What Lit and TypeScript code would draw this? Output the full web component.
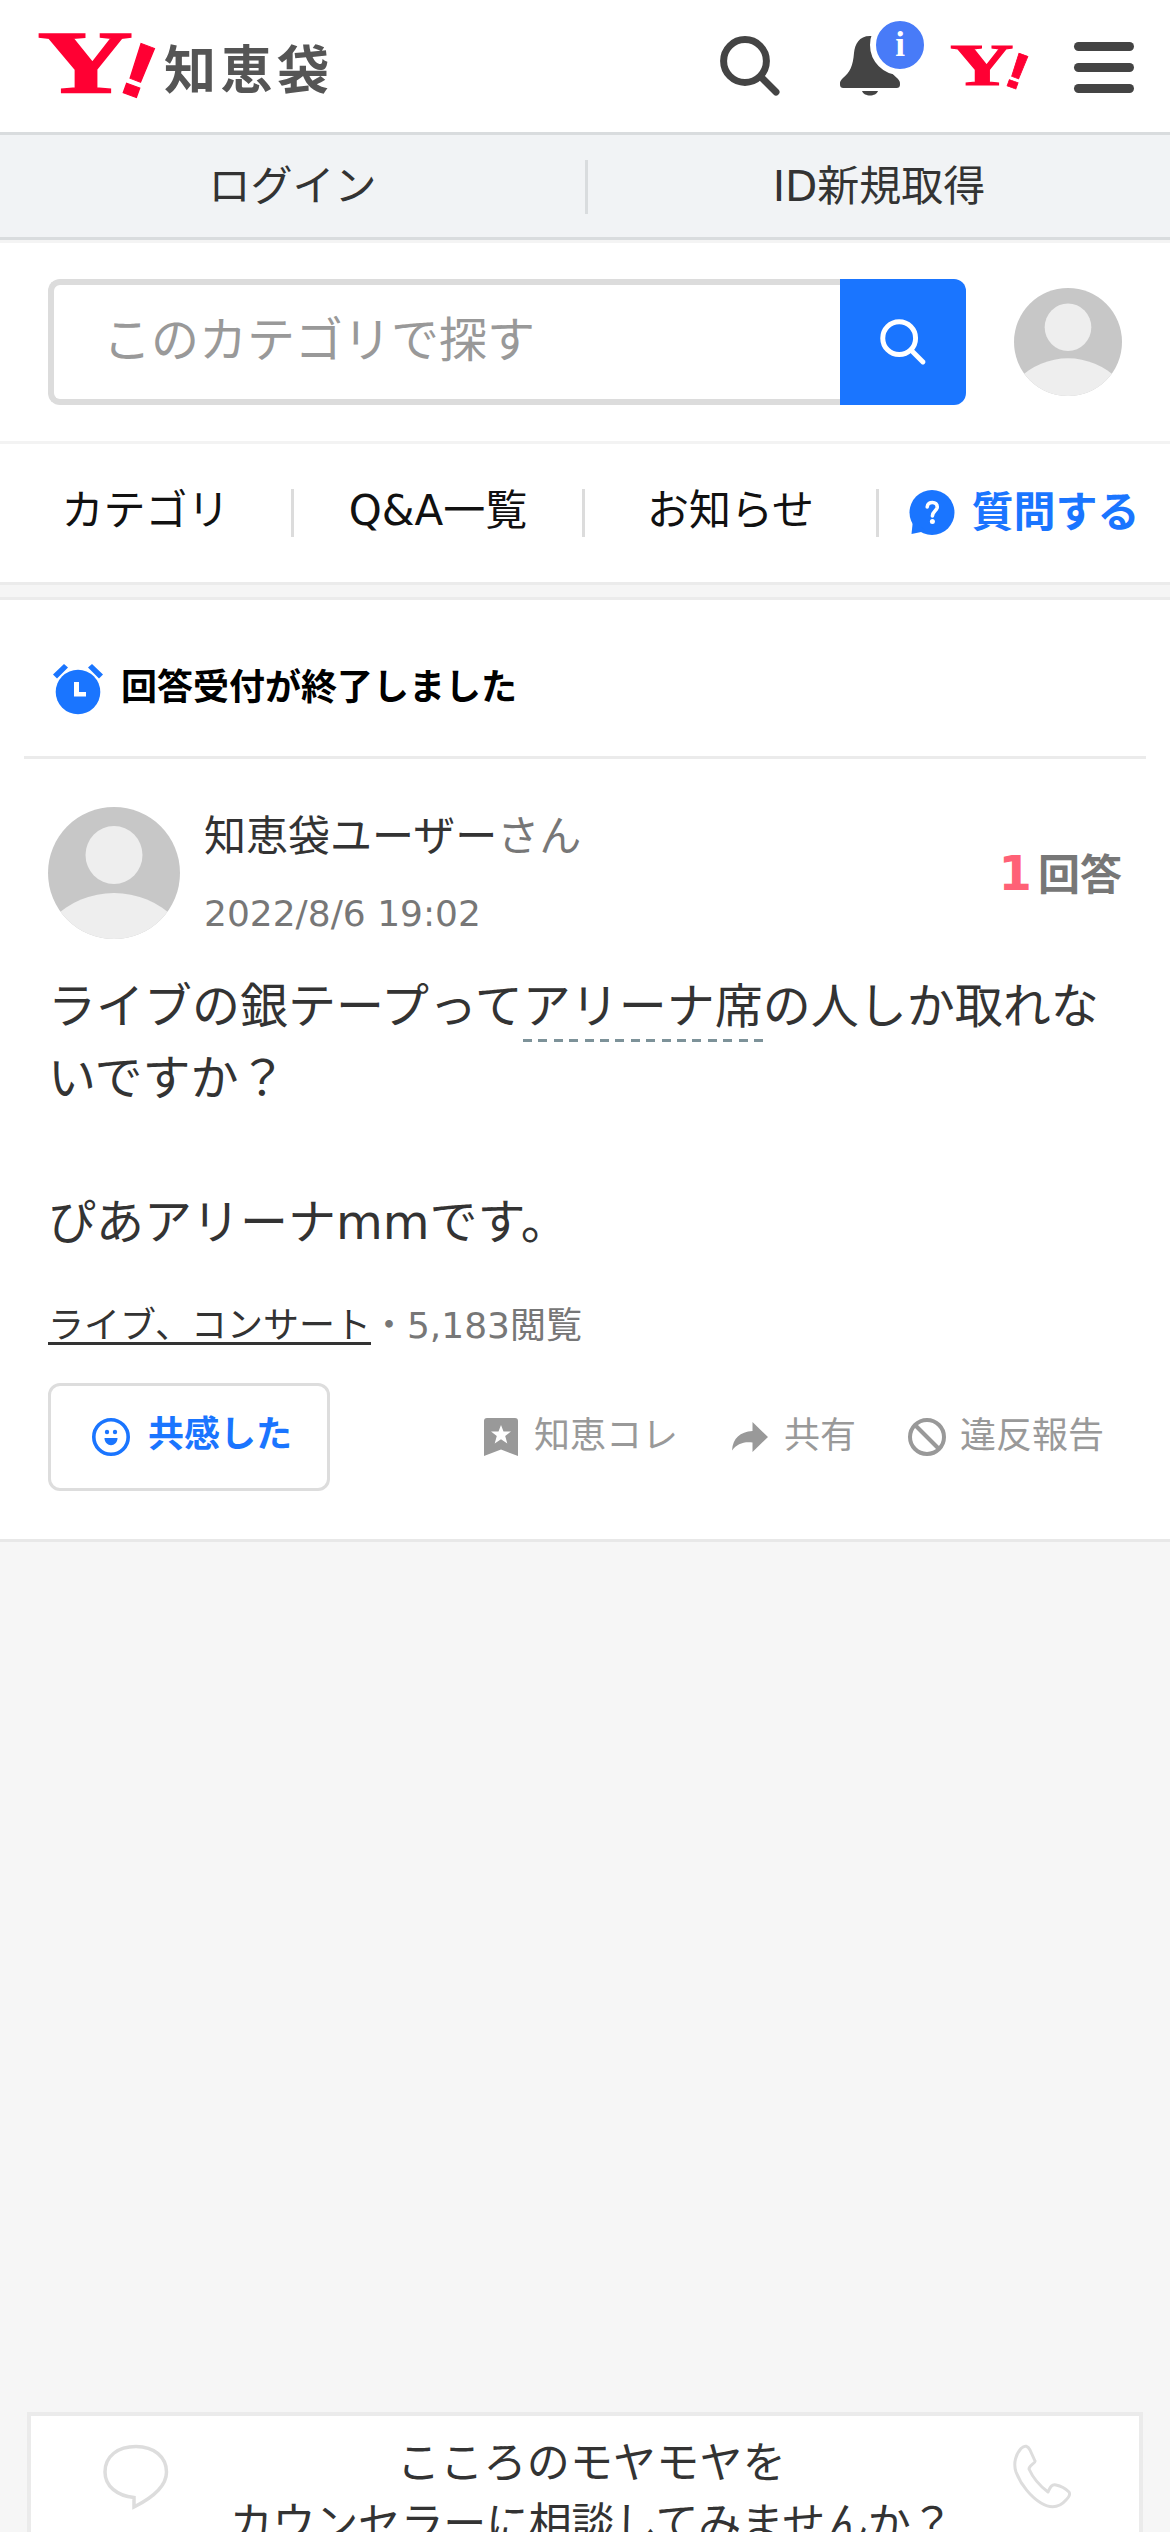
import { LitElement, html, css, svg } from "lit";
import { customElement, property } from "lit/decorators.js";

@customElement("user-avatar")
class UserAvatar extends LitElement {
  static styles = css`
    :host { display: block; flex: none; border-radius: 50%; overflow: hidden; }
    svg { display: block; width: 100%; height: 100%; }
  `;
  render() {
    return html`<svg viewBox="0 0 132 132">
      <rect width="132" height="132" fill="#c7c7c7" />
      <ellipse cx="66" cy="48" rx="28.5" ry="29" fill="#eee" />
      <circle cx="66" cy="172" r="86" fill="#eee" />
    </svg>`;
  }
}

@customElement("brand-mark")
class BrandMark extends LitElement {
  static styles = css`
    :host { display: block; flex: none; }
    svg { display: block; width: 100%; height: 100%; overflow: visible; }
    .y { font: bold 88px "Liberation Serif", serif; stroke: #ff0033; stroke-width: 1.6px; }
    .bang { font: bold 76px "Liberation Sans", sans-serif; stroke: #ff0033; stroke-width: 1px; }
  `;
  render() {
    return html`<svg viewBox="0 0 117 62" fill="#ff0033">
      <text class="y" transform="translate(-1.5 60) scale(1.5 1)">Y</text>
      <text class="bang" transform="translate(75.5 57.5) rotate(20) scale(1.3 1)">!</text>
    </svg>`;
  }
}

@customElement("action-item")
class ActionItem extends LitElement {
  @property() label = "";
  static styles = css`
    :host { display: flex; align-items: center; color: #999; }
    .label { font-size: 36px; line-height: 54px; padding-bottom: 3px; white-space: nowrap; }
  `;
  render() {
    return html`<slot></slot><span class="label">${this.label}</span>`;
  }
}

const magnifier = (w: number, color: string) => svg`
  <g fill="none" stroke=${color} stroke-linecap="round">
    <circle cx="25" cy="25" r="21.4" stroke-width=${w} />
    <path d="M42 42 L56 56" stroke-width=${w} />
  </g>`;

@customElement("app-root")
class AppRoot extends LitElement {
  static styles = css`
    :host {
      display: block;
      width: 1170px;
      height: 2532px;
      overflow: hidden;
      background: #f6f6f6;
      color: #333;
      font-family: "DejaVu Sans", "Noto Sans CJK JP", sans-serif;
    }
    * { box-sizing: border-box; }
    svg { display: block; flex: none; overflow: visible; }
    .header { display: flex; align-items: center; height: 132px; padding: 0 36px 0 39px; background: #fff; }
    .logo { width: 117px; height: 62px; margin-bottom: 6px; }
    .service { margin: 2px auto 0 8px; font: bold 52px/60px "Noto Sans CJK JP", sans-serif; letter-spacing: 4.5px; color: #555; }
    .bell { position: relative; margin: 0 51px 0 60px; }
    .badge { position: absolute; left: 30px; top: -21px; width: 60px; height: 60px; border: 6px solid #fff; border-radius: 50%; background: #487bf8; color: #fff; font: bold 35px/47px "Liberation Serif", serif; text-align: center; }
    .mini { width: 78px; height: 42px; margin-right: 45px; }
    .account { display: grid; grid-template-columns: 585px 3px 582px; height: 108px; padding-top: 1px; border: 3px solid #d9dcde; border-width: 3px 0; background: #f1f3f5; align-items: center; font-size: 42px; line-height: 60px; }
    .account-link { text-align: center; }
    .account-sep { height: 54px; background: #d9dcde; }
    .search { display: flex; align-items: center; height: 204px; padding: 0 48px; background: #fff; border-top: 3px solid #f4f4f4; border-bottom: 3px solid #f3f3f3; }
    .field { display: flex; align-items: center; width: 792px; height: 126px; padding: 0 0 5px 49px; border: 6px solid #dcdcdc; border-right: 0; border-radius: 12px 0 0 12px; color: #999; font-size: 48px; line-height: 60px; }
    .go { display: flex; align-items: center; justify-content: center; width: 126px; height: 126px; margin-right: 48px; border-radius: 0 12px 12px 0; background: #1a75ff; }
    .me { width: 108px; height: 108px; }
    .nav { display: grid; grid-template-columns: 294px 291px 294px 291px; height: 138px; padding-top: 45px; background: #fff; color: #111; font-size: 42px; line-height: 44px; }
    .tab { height: 48px; border-right: 3px solid #dcdcdc; text-align: center; }
    .ask { display: flex; align-items: center; justify-content: center; gap: 16px; height: 48px; color: #1a75ff; font-weight: bold; }
    .band { height: 18px; border: 3px solid #ebebeb; border-width: 3px 0; background: #f5f5f5; }
    .card { height: 942px; background: #fff; border-bottom: 3px solid #e8e8e8; }
    .closed { display: flex; align-items: center; gap: 15px; height: 159px; margin: 0 24px; padding: 21px 0 0 28px; border-bottom: 3px solid #ebebeb; color: #000; font-size: 36px; font-weight: bold; line-height: 48px; }
    .closed-text { margin-top: -1px; }
    .author { display: flex; height: 180px; padding: 48px 48px 0; }
    .face { width: 132px; height: 132px; margin-right: 24px; }
    .who { flex: 1; }
    .name { font-size: 42px; line-height: 60px; }
    .san { color: #777; }
    .date { margin-top: 20px; font-size: 36px; line-height: 54px; color: #777; }
    .count { display: flex; align-items: baseline; gap: 6px; margin-top: 33px; height: 66px; font-weight: bold; font-size: 42px; line-height: 66px; color: #777; }
    .num { font-size: 48px; color: #ff6176; }
    .question { margin: 31px 48px 0; font-size: 48px; line-height: 72px; white-space: pre-line; }
    .term { padding-bottom: 8px; background: repeating-linear-gradient(90deg, #7d9299 0 9px, transparent 9px 15.4px) left bottom / 100% 3px no-repeat; }
    .meta { margin: 41px 48px 0; height: 54px; font-size: 36px; line-height: 54px; color: #777; }
    .cat { display: inline-block; height: 46px; border-bottom: 3px solid #333; color: #333; }
    .actions { display: flex; align-items: center; height: 108px; margin: 30px 48px 0; }
    .empathy { display: flex; align-items: center; gap: 18px; width: 282px; height: 108px; margin-right: 154px; padding-left: 41px; border: 3px solid #ddd; border-radius: 12px; color: #1a75ff; font-size: 36px; font-weight: bold; line-height: 54px; }
    .empathy-text { padding-bottom: 4px; }
    .i16 { margin-right: 16px; }
    .i14 { margin-right: 14px; }
    .share { margin-left: 54px; }
    .report { margin-left: 52px; }
    .promo { display: flex; justify-content: space-between; margin: 870px 27px 0; height: 300px; border: 4px solid #ebebeb; background: #fff; padding: 27px 68px 0 71px; }
    .promo-text { margin-top: -10px; font-size: 43px; letter-spacing: 0.2px; line-height: 61px; text-align: center; color: #333; white-space: nowrap; }
    .promo-line { letter-spacing: -0.3px; }
  `;

  render() {
    return html`
      <header class="header">
        <brand-mark class="logo"></brand-mark>
        <span class="service">知恵袋</span>
        <svg width="60" height="60" viewBox="0 0 60 60">${magnifier(7, "#444")}</svg>
        <div class="bell">
          <svg width="60" height="60" viewBox="0 0 60 60" fill="#444">
            <path d="M30 0 C19 0 15 8 14 17 C13 30 10 36 3 42 C0 45 0 46 0 48 C0 51 1 52 4 52 H56 C59 52 60 51 60 48 C60 46 60 45 57 42 C50 36 47 30 46 17 C45 8 41 0 30 0 Z" />
            <path d="M22 55 H38 C36 61 24 61 22 55 Z" />
          </svg>
          <span class="badge">i</span>
        </div>
        <brand-mark class="mini"></brand-mark>
        <svg width="60" height="60" viewBox="0 0 60 60" fill="#444">
          <rect y="6" width="60" height="9" rx="4.5" />
          <rect y="27" width="60" height="9" rx="4.5" />
          <rect y="48" width="60" height="9" rx="4.5" />
        </svg>
      </header>

      <div class="account">
        <span class="account-link">ログイン</span>
        <span class="account-sep"></span>
        <span class="account-link">ID新規取得</span>
      </div>

      <div class="search">
        <div class="field">このカテゴリで探す</div>
        <div class="go"><svg width="46" height="46" viewBox="0 0 60 60">${magnifier(6.5, "#fff")}</svg></div>
        <user-avatar class="me"></user-avatar>
      </div>

      <nav class="nav">
        <span class="tab">カテゴリ</span>
        <span class="tab">Q&amp;A一覧</span>
        <span class="tab">お知らせ</span>
        <span class="ask">
          <svg width="46" height="46" viewBox="0 0 46 46">
            <circle cx="23" cy="22.5" r="22.5" fill="#1a75ff" />
            <path d="M4 30 L2.5 44 L17 41 Z" fill="#1a75ff" />
            <path d="M18.2 17 C18.5 10.8 28.7 11 28.2 17.2 C27.8 21 23.4 21.3 23.4 26" fill="none" stroke="#fff" stroke-width="3.6" stroke-linecap="round" />
            <circle cx="23.4" cy="31.5" r="2.5" fill="#fff" />
          </svg>
          質問する
        </span>
      </nav>
      <div class="band"></div>

      <main class="card">
        <div class="closed">
          <svg width="54" height="54" viewBox="0 0 54 54" fill="#1a75ff">
            <circle cx="26" cy="30" r="22.3" />
            <path d="M1 12.5 L12 2 L16 5.5 L5 16.5 Z M51 12.5 L40 2 L36 5.5 L47 16.5 Z" />
            <path d="M22 20 H27 V30 H34 V34.500 H22 Z" fill="#fff" />
          </svg>
          <span class="closed-text">回答受付が終了しました</span>
        </div>

        <div class="author">
          <user-avatar class="face"></user-avatar>
          <div class="who">
            <div class="name">知恵袋ユーザー<span class="san">さん</span></div>
            <div class="date">2022/8/6 19:02</div>
          </div>
          <div class="count"><span class="num">1</span><span>回答</span></div>
        </div>

        <div class="question">ライブの銀テープって<span class="term">アリーナ席</span>の人しか取れないですか？<br /><br />ぴあアリーナmmです。</div>

        <div class="meta"><span class="cat">ライブ、コンサート</span>・5,183閲覧</div>

        <div class="actions">
          <div class="empathy">
            <svg width="38" height="38" viewBox="0 0 38 38" fill="#1a75ff">
              <circle cx="19" cy="19" r="17.2" fill="none" stroke="#1a75ff" stroke-width="3.6" />
              <circle cx="15" cy="14" r="2.2" />
              <circle cx="23" cy="14" r="2.2" />
              <path d="M12.5 20 H25.5 C25.5 29.5 12.5 29.5 12.5 20 Z" />
            </svg>
            <span class="empathy-text">共感した</span>
          </div>
          <action-item label="知恵コレ">
            <svg class="i16" width="34" height="38" viewBox="0 0 34 38">
              <path d="M0 3 Q0 0 3 0 H31 Q34 0 34 3 V38 L17 31.5 L0 38 Z" fill="#999" />
              <path d="M17 7 L19.5 13.5 H27 L21.2 18 L23.300 25.500 L17 21.200 L10.700 25.500 L12.800 18 L7 13.500 H14.500 Z" fill="#fff" />
            </svg>
          </action-item>
          <action-item class="share" label="共有">
            <svg class="i16" width="36" height="30" viewBox="0 0 36 30">
              <path d="M20.500 0 L36 15 L20.500 30 V20.500 C11 19.500 5 22 0 28.500 C1 16 8 10 20.500 9 Z" fill="#999" />
            </svg>
          </action-item>
          <action-item class="report" label="違反報告">
            <svg class="i14" width="38" height="38" viewBox="0 0 38 38" fill="none" stroke="#999" stroke-width="4">
              <circle cx="19" cy="19" r="17" />
              <path d="M7 7 L31 31" />
            </svg>
          </action-item>
        </div>
      </main>

      <section class="promo">
        <svg width="68" height="66" viewBox="0 0 68 66" fill="none" stroke="#ddd" stroke-width="3.5">
          <path d="M32 54.5 C15 53 3 43 3 29 C3 13 16 3.5 34 3.5 C52 3.5 64.5 14 64.5 29 C64.5 44 50 55 32 64 Z" />
        </svg>
        <div class="promo-text">こころのモヤモヤを<br /><span class="promo-line">カウンセラーに相談してみませんか？</span></div>
        <svg width="58" height="66" viewBox="0 0 58 66" fill="none" stroke="#ddd" stroke-width="3" stroke-linejoin="round">
          <path d="M8 5.500 C12 1.500 15 3 17 7 L22 18 C23 20 16 22 16 26 C20 35 27 43 35 49 C37 45 38 41 43 42 C48 43 53 46 56 49 C58 52 55 55 53 57 C46 65 38 66 28 60 C18 54 8 42 3 29 C0 20 3 11 8 5.500 Z" />
        </svg>
      </section>
    `;
  }
}
